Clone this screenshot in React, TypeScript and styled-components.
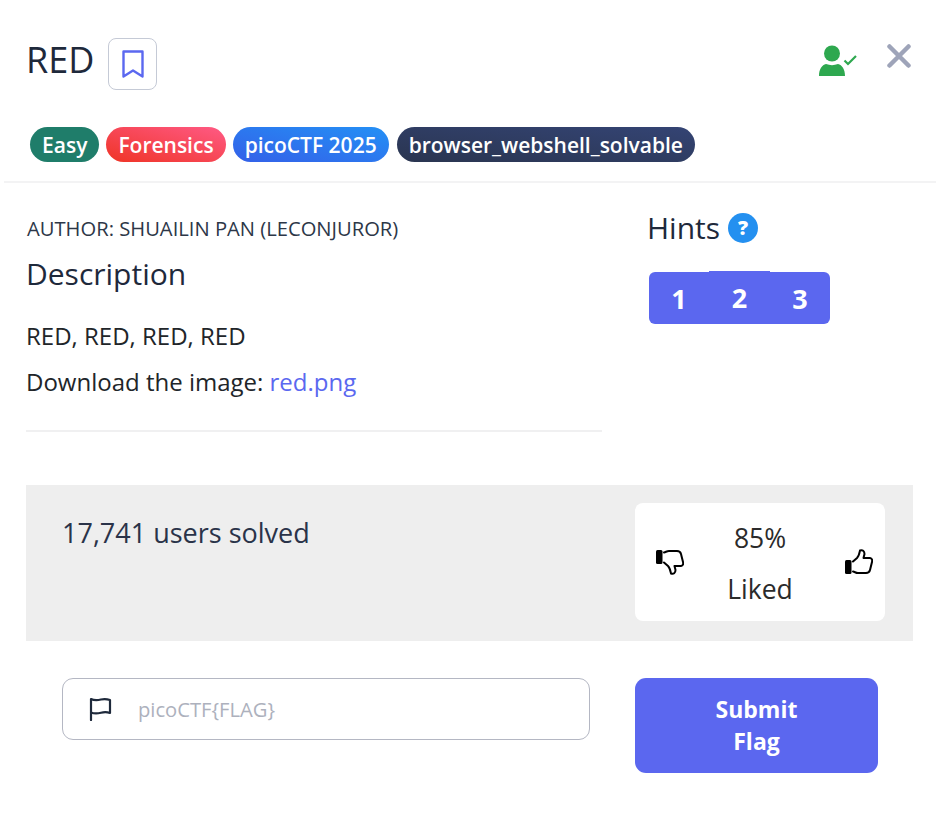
import React from 'react';
import styled, { createGlobalStyle } from 'styled-components';

const GlobalStyle = createGlobalStyle`
    html, body {
        margin: 0;
        background: #fff;
        font-family: "Open Sans", "Liberation Sans", sans-serif;
        color: #1f2a44;
    }
    * { box-sizing: border-box; }
`;

const Modal = styled.div`
    width: 943px;
    height: 817px;
    background: #fff;
    overflow: hidden;
`;

const Header = styled.div`
    display: flex;
    justify-content: space-between;
    align-items: flex-start;
    padding: 37px 32px 0 26px;
    height: 127px;
`;

const TitleGroup = styled.div`
    display: flex;
    align-items: flex-start;
    gap: 14px;
`;

const Title = styled.h1`
    margin: 0;
    font-size: 36px;
    line-height: 46px;
    font-weight: 400;
    color: #1e293b;
`;

const BookmarkButton = styled.button`
    width: 49px;
    height: 52px;
    margin-top: 1px;
    padding: 0;
    display: flex;
    align-items: center;
    justify-content: center;
    background: #fff;
    border: 1px solid #c5cad6;
    border-radius: 8px;
`;

const HeaderActions = styled.div`
    display: flex;
    align-items: flex-start;
    gap: 30px;
    padding-top: 7px;
`;

const TagRow = styled.div`
    display: flex;
    gap: 7px;
    padding-left: 30px;
    height: 54px;
`;

const Tag = styled.span<{ $bg: string }>`
    height: 35px;
    padding: 0 12px;
    display: inline-flex;
    align-items: center;
    border-radius: 18px;
    font-size: 21px;
    font-weight: 600;
    color: #fff;
    background: ${p => p.$bg};
    &:last-child { margin-left: 1px; }
`;

const Divider = styled.div`
    height: 2px;
    margin: 0 7px 0 4px;
    background: #f3f3f4;
`;

const Body = styled.div`
    display: flex;
    padding-left: 26px;
    height: 302px;
`;

const InfoColumn = styled.div`
    width: 576px;
    padding-top: 32px;
`;

const Author = styled.div`
    margin-left: 1px;
    font-size: 20.2px;
    line-height: 27px;
    color: #2d3748;
`;

const SectionTitle = styled.h2`
    margin: 13px 0 0;
    font-size: 30px;
    line-height: 38px;
    font-weight: 400;
    color: #1e293b;
`;

const Paragraph = styled.p`
    margin: 0;
    font-size: 24px;
    line-height: 32px;
    color: #212529;
    & + & { margin-top: 14px; }
`;

const Copy = styled.div`
    margin-top: 27px;
    padding-bottom: 32px;
    border-bottom: 2px solid #f0f0f1;
`;

const LinkText = styled.a`
    color: #5b68f0;
    text-decoration: none;
`;

const HintColumn = styled.div`
    padding: 24px 0 0 46px;
`;

const HintTitle = styled.div`
    display: flex;
    align-items: center;
    gap: 8px;
    margin-left: -1px;
    font-size: 30px;
    line-height: 42px;
    color: #1e293b;
`;

const HelpBadge = styled.span`
    width: 30px;
    height: 30px;
    display: flex;
    align-items: center;
    justify-content: center;
    border-radius: 50%;
    background: #2490f0;
    color: #fff;
    font-size: 20px;
    font-weight: 800;
    line-height: 1;
`;

const HintButtons = styled.div`
    display: flex;
    margin: 23px 0 0 1px;
`;

const HintButton = styled.button<{ $pos: 'first' | 'mid' | 'last' }>`
    width: ${p => (p.$pos === 'mid' ? '61px' : '60px')};
    height: ${p => (p.$pos === 'mid' ? '53px' : '52px')};
    margin-top: ${p => (p.$pos === 'mid' ? '-1px' : '0')};
    border: 0;
    padding: 0;
    background: #5b67ef;
    color: #fff;
    font-family: inherit;
    font-size: 27px;
    font-weight: 700;
    border-radius: ${p => (p.$pos === 'first' ? '6px 0 0 6px' : p.$pos === 'last' ? '0 6px 6px 0' : '0')};
`;

const StatsBand = styled.div`
    display: flex;
    justify-content: space-between;
    align-items: flex-start;
    width: 887px;
    height: 156px;
    margin-left: 26px;
    padding: 18px 28px 0 36px;
    background: #eeeeee;
`;

const SolvedText = styled.div`
    font-size: 27px;
    line-height: 60px;
    color: #2a3349;
`;

const LikeCard = styled.div`
    display: grid;
    grid-template-columns: 1fr auto 1fr;
    align-items: center;
    width: 250px;
    height: 118px;
    padding: 0 12px;
    background: #fff;
    border-radius: 8px;
`;

const LikeText = styled.div`
    padding-top: 4px;
    text-align: center;
    font-size: 26.5px;
    line-height: 51px;
    color: #2b2b2b;
`;

const ThumbIcon = styled.svg<{ $down?: boolean }>`
    width: 28px;
    height: 26px;
    justify-self: ${p => (p.$down ? 'start' : 'end')};
    margin-left: ${p => (p.$down ? '9px' : '0')};
    transform: ${p => (p.$down ? 'scaleY(-1)' : 'none')};
`;

const FlagForm = styled.div`
    display: flex;
    align-items: flex-start;
    gap: 45px;
    padding: 37px 0 0 62px;
`;

const FlagField = styled.div`
    display: flex;
    align-items: center;
    width: 528px;
    height: 62px;
    padding-left: 26px;
    gap: 23px;
    border: 1px solid #b4b7c3;
    border-radius: 11px;
`;

const FlagInput = styled.input`
    flex: 1;
    min-width: 0;
    border: 0;
    outline: 0;
    font-family: inherit;
    font-size: 20.2px;
    color: #1e293b;
    &::placeholder { color: #adb1bd; opacity: 1; }
`;

const SubmitButton = styled.button`
    width: 243px;
    height: 95px;
    border: 0;
    border-radius: 11px;
    background: #5b67ef;
    color: #fff;
    font-family: inherit;
    font-size: 23px;
    line-height: 32px;
    font-weight: 700;
    padding: 0 80px 2px;
`;

const tags = [
    { label: 'Easy', bg: '#1f7d6a' },
    { label: 'Forensics', bg: 'linear-gradient(to top right, #ef3426, #ff5a85)' },
    { label: 'picoCTF 2025', bg: 'linear-gradient(to top right, #3460e8, #2490f5)' },
    { label: 'browser_webshell_solvable', bg: 'linear-gradient(to top right, #2a3550, #344474)' },
];

const Thumb: React.FC<{ down?: boolean }> = ({ down }) => (
    <ThumbIcon $down={down} viewBox="0 0 28 26">
        <rect x="0" y="11" width="6.5" height="14" rx="1.5" fill="#000" />
        <path
            d="M8 12.5l4-3.5c2-2 2.5-5 3-7.5 2.5-1 4.5.5 4.5 3.5L18.5 9H25c2 .3 2.5 2 2 4l-2 8c-.5 2-2 3-4 3h-8c-2 0-3-1-5-1.5"
            fill="none"
            stroke="#000"
            strokeWidth="2"
            strokeLinecap="round"
            strokeLinejoin="round"
        />
    </ThumbIcon>
);

const App: React.FC = () => {
    return (
        <Modal>
            <GlobalStyle />
            <Header>
                <TitleGroup>
                    <Title>RED</Title>
                    <BookmarkButton aria-label="Bookmark">
                        <svg width="22" height="28" viewBox="0 0 22 28" fill="none" stroke="#5b68f0" strokeWidth="2.4" strokeLinejoin="round">
                            <path d="M1.5 1.5h19v25L11 20.5l-9.5 6z" />
                        </svg>
                    </BookmarkButton>
                </TitleGroup>
                <HeaderActions>
                    <svg width="38" height="33" viewBox="0 0 38 33" fill="#2ea84f">
                        <circle cx="13" cy="9.5" r="8" />
                        <path d="M0 32c0-7 3-11 7-12 4 1.5 8 1.5 12 0 4 1 7 5 7 12z" />
                        <path d="M25.5 16.5l3.5 3.5 8-8" fill="none" stroke="#2ea84f" strokeWidth="2.2" />
                    </svg>
                    <svg width="24" height="24" viewBox="0 0 24 24" stroke="#9ea4b9" strokeWidth="4.5" strokeLinecap="round">
                        <path d="M2.5 2.5l19 19M21.5 2.5l-19 19" />
                    </svg>
                </HeaderActions>
            </Header>
            <TagRow>
                {tags.map(t => (
                    <Tag key={t.label} $bg={t.bg}>{t.label}</Tag>
                ))}
            </TagRow>
            <Divider />
            <Body>
                <InfoColumn>
                    <Author>AUTHOR: SHUAILIN PAN (LECONJUROR)</Author>
                    <SectionTitle>Description</SectionTitle>
                    <Copy>
                        <Paragraph>RED, RED, RED, RED</Paragraph>
                        <Paragraph>Download the image: <LinkText href="#">red.png</LinkText></Paragraph>
                    </Copy>
                </InfoColumn>
                <HintColumn>
                    <HintTitle>
                        Hints
                        <HelpBadge>?</HelpBadge>
                    </HintTitle>
                    <HintButtons>
                        <HintButton $pos="first">1</HintButton>
                        <HintButton $pos="mid">2</HintButton>
                        <HintButton $pos="last">3</HintButton>
                    </HintButtons>
                </HintColumn>
            </Body>
            <StatsBand>
                <SolvedText>17,741 users solved</SolvedText>
                <LikeCard>
                    <Thumb down />
                    <LikeText>85%<br />Liked</LikeText>
                    <Thumb />
                </LikeCard>
            </StatsBand>
            <FlagForm>
                <FlagField>
                    <svg width="24" height="24" viewBox="0 0 24 24" fill="none" stroke="#1e293b" strokeWidth="2.2" strokeLinecap="round" strokeLinejoin="round">
                        <path d="M2 23V2c3 1.5 6 1.5 10 .5 3-.7 6-.5 9 .5v13c-3-1-6-1-9-.2-4 1-7 1-10-.3" />
                    </svg>
                    <FlagInput placeholder="picoCTF{FLAG}" />
                </FlagField>
                <SubmitButton>Submit Flag</SubmitButton>
            </FlagForm>
        </Modal>
    );
};

export default App;
